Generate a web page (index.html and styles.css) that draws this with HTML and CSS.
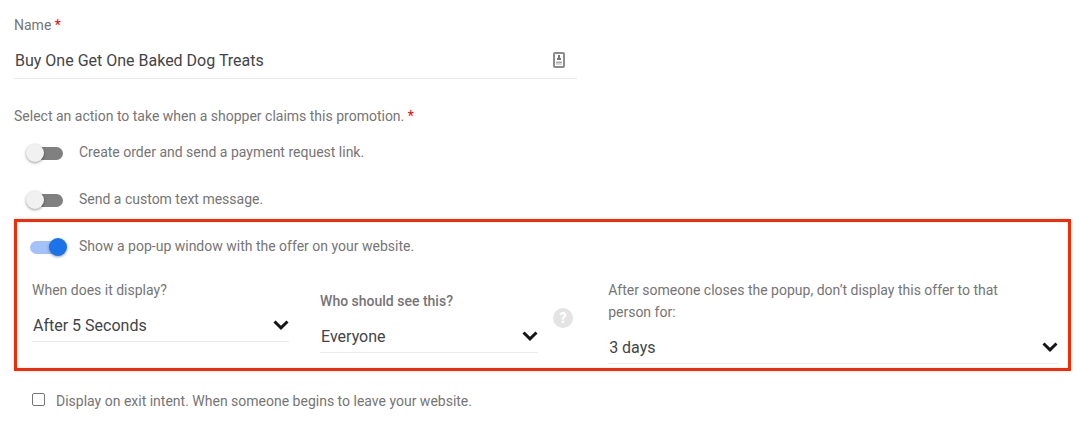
FILE: index.html
```html
<!DOCTYPE html>
<html lang="en">
<head>
    <meta charset="UTF-8">
    <meta name="viewport" content="width=device-width, initial-scale=1.0">
    <title>Edit Promotion</title>
    <link rel="stylesheet" href="styles.css">
</head>
<body>

<form class="promo-form">
    <div class="name-field">
        <label for="name" class="form-label">Name <span class="required">*</span></label>
        <div class="control">
            <input type="text" class="form-control" id="name" value="Buy One Get One Baked Dog Treats">
            <svg class="contact-icon" width="12" height="16" viewBox="0 0 12 16" aria-hidden="true">
                <rect x="1" y="1" width="10" height="14" rx="1" fill="#fff" stroke="#8c8c8c" stroke-width="2"/>
                <path d="M6 3v3" stroke="#777" stroke-width="2"/>
                <path d="M4 7h4" stroke="#777" stroke-width="2"/>
                <path d="M3 10.500h6" stroke="#aaa" stroke-width="2"/>
                <path d="M3 12.500h6" stroke="#ddd"/>
            </svg>
        </div>
    </div>

    <p class="form-label actions-title">Select an action to take when a shopper claims this promotion. <span class="required">*</span></p>

    <div class="actions">
        <label class="action">
            <input type="checkbox" role="switch" class="switch">
            Create order and send a payment request link.
        </label>
        <label class="action">
            <input type="checkbox" role="switch" class="switch">
            Send a custom text message.
        </label>
    </div>

    <div class="popup-box">
        <label class="action">
            <input type="checkbox" role="switch" class="switch" checked>
            Show a pop-up window with the offer on your website.
        </label>

        <div class="popup-options">
            <div class="field">
                <label for="delay" class="form-label">When does it display?</label>
                <div class="control">
                    <select class="form-control" id="delay">
                        <option>After 5 Seconds</option>
                    </select>
                    <svg class="chevron" width="16" height="10" viewBox="0 0 16 10" aria-hidden="true"><path d="M1.500 1.500 8 7.800l6.500-6.300"/></svg>
                </div>
            </div>

            <div class="audience">
                <div class="field">
                    <label for="audience" class="form-label strong">Who should see this?</label>
                    <div class="control">
                        <select class="form-control" id="audience">
                            <option>Everyone</option>
                        </select>
                        <svg class="chevron" width="16" height="10" viewBox="0 0 16 10" aria-hidden="true"><path d="M1.500 1.500 8 7.800l6.500-6.300"/></svg>
                    </div>
                </div>
                <button type="button" class="help" aria-label="Help">?</button>
            </div>

            <div class="field">
                <label for="snooze" class="form-label snooze-label">After someone closes the popup, don’t display this offer to that person for:</label>
                <div class="control">
                    <select class="form-control" id="snooze">
                        <option>3 days</option>
                    </select>
                    <svg class="chevron" width="16" height="10" viewBox="0 0 16 10" aria-hidden="true"><path d="M1.500 1.500 8 7.800l6.500-6.300"/></svg>
                </div>
            </div>
        </div>
    </div>

    <label class="exit-intent">
        <input type="checkbox" class="checkbox">
        Display on exit intent. When someone begins to leave your website.
    </label>
</form>

</body>
</html>
```

FILE: styles.css
```css
/* Global Styles */
* {
    box-sizing: border-box;
}

body {
    margin: 0;
    background: #fff;
    color: #757575;
    font-family: Roboto, sans-serif;
    font-size: 14px;
    line-height: 22px;
}

.promo-form {
    padding: 14px 13px 14px 14px;
}

/* Labels and inputs */
.form-label {
    display: block;
    margin: 0;
}

.strong {
    font-weight: 500;
}

.snooze-label {
    padding-right: 32px;
}

.required {
    color: #f00;
}

.control {
    position: relative;
    margin-top: 8px;
}

.form-control {
    display: block;
    width: 100%;
    height: 33px;
    padding: 0 1px;
    border: 0;
    border-bottom: 1px solid #ebebeb;
    border-radius: 0;
    background: transparent;
    color: #424548;
    font-family: inherit;
    font-size: 16px;
    appearance: none;
    outline: none;
}

.name-field {
    max-width: 563px;
}

.name-field .form-control {
    height: 35px;
    padding-bottom: 2px;
}

.contact-icon {
    position: absolute;
    top: 8px;
    right: 12px;
}

.chevron {
    position: absolute;
    top: 11px;
    right: 0;
    fill: none;
    stroke: #161616;
    stroke-width: 3;
    pointer-events: none;
}

/* Action switches */
.actions-title {
    margin: 26px 0 5px;
}

.actions {
    display: grid;
    gap: 7px;
    padding-left: 13px;
}

.action {
    display: flex;
    align-items: center;
    gap: 16px;
    height: 40px;
}

.switch {
    position: relative;
    flex: none;
    width: 36px;
    height: 13px;
    margin: 3px 0 0;
    border-radius: 7px;
    background: #808080;
    appearance: none;
}

.switch::before {
    content: "";
    position: absolute;
    top: -3px;
    left: -1px;
    width: 18px;
    height: 18px;
    border-radius: 50%;
    background: #f1f1f1;
    box-shadow: 0 1px 3px rgba(0, 0, 0, 0.4);
}

.switch:checked {
    background: #a3c2fa;
}

.switch:checked::before {
    left: 19px;
    background: #1a73e8;
}

/* Popup settings */
.popup-box {
    padding: 4px 10px 4px 13px;
    border: 3px solid #ff2600;
}

.popup-box .action {
    gap: 13px;
}

.popup-options {
    display: grid;
    grid-template-columns: 4fr 4fr 7fr;
    align-items: start;
    gap: 31px;
    margin-top: 13px;
    padding-left: 2px;
}

.audience {
    display: flex;
    align-items: center;
    align-self: center;
    gap: 15px;
    padding-right: 4px;
}

.audience .field {
    flex: 1;
}

.help {
    width: 20px;
    height: 20px;
    margin-bottom: 8px;
    padding: 0;
    border: 0;
    border-radius: 50%;
    background: #e4e4e4;
    color: #fff;
    font-family: inherit;
    font-size: 14px;
    font-weight: 900;
    line-height: 20px;
}

/* Exit intent */
.exit-intent {
    display: flex;
    align-items: center;
    gap: 11px;
    margin-top: 19px;
    padding-left: 18px;
}

.checkbox {
    width: 13px;
    height: 13px;
    margin: 0 0 3px;
    border: 1px solid #767676;
    border-radius: 2px;
    background: #fff;
    appearance: none;
}

.checkbox:checked {
    background: #1a73e8;
}
```
